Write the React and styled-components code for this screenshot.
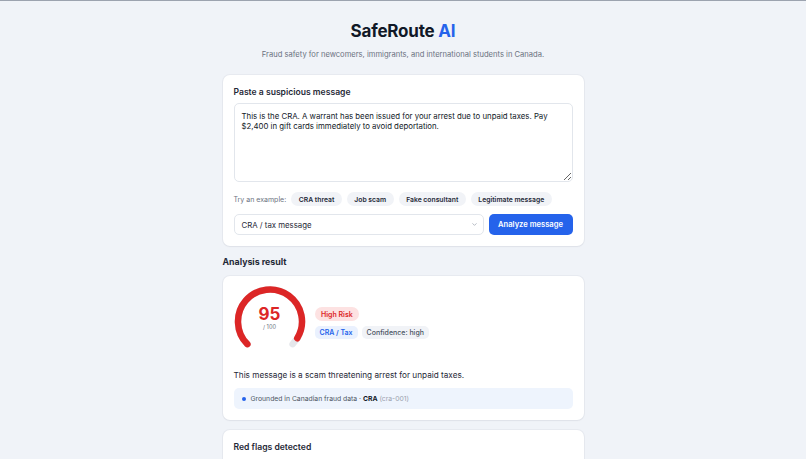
import React from "react";
import styled, { createGlobalStyle } from "styled-components";

const Global = createGlobalStyle`
  html, body { margin: 0; padding: 0; }
  body {
    background: #f0f3f8;
    font-family: Inter, "Noto Sans", "Liberation Sans", sans-serif;
    color: #111827;
    -webkit-font-smoothing: antialiased;
  }
  * { box-sizing: border-box; }
`;

const Page = styled.div`
  min-height: 459px;
  border-top: 1px solid #9ca3af;
  padding: 18px 0 20px;
`;

const Column = styled.main`
  width: 361px;
  margin: 0 auto;
  display: flex;
  flex-direction: column;
`;

const Header = styled.header`
  text-align: center;
  margin-bottom: 15px;
`;

const Title = styled.h1`
  margin: 0;
  font-size: 17px;
  line-height: 24px;
  font-weight: 700;
  letter-spacing: -0.2px;
  color: #111827;
`;

const Accent = styled.span`
  color: #2563eb;
`;

const Subtitle = styled.p`
  margin: 6px 0 0;
  font-size: 7.6px;
  line-height: 11px;
  color: #6b7280;
`;

const Card = styled.section`
  background: #fff;
  border-radius: 7px;
  box-shadow: 0 0 0 1px rgba(15, 23, 42, 0.04), 0 1px 2px rgba(15, 23, 42, 0.04);
  padding: ${(p) => p.$pad || "11px"};
  display: flex;
  flex-direction: column;
`;

const Label = styled.h2`
  margin: 0;
  font-size: 8.6px;
  line-height: 12px;
  font-weight: 600;
  color: #1f2937;
`;

const TextArea = styled.textarea`
  margin-top: 5px;
  height: 79px;
  width: 100%;
  resize: vertical;
  border: 1px solid #e2e6ec;
  border-radius: 5px;
  padding: 7px 7px;
  font-family: inherit;
  font-size: 7.8px;
  line-height: 10px;
  color: #111827;
  outline: none;
`;

const ExampleRow = styled.div`
  margin-top: 10px;
  display: flex;
  align-items: center;
  gap: 5px;
`;

const Hint = styled.span`
  font-size: 7px;
  color: #6b7280;
`;

const Chip = styled.button`
  border: none;
  background: #f1f3f7;
  border-radius: 999px;
  height: 14px;
  padding: 0 7.5px;
  font-family: inherit;
  font-size: 6.8px;
  font-weight: 600;
  color: #1f2937;
`;

const ControlRow = styled.div`
  margin-top: 8px;
  display: flex;
  gap: 5px;
`;

const Select = styled.div`
  flex: 1;
  height: 21px;
  border: 1px solid #e2e6ec;
  border-radius: 5px;
  display: flex;
  align-items: center;
  justify-content: space-between;
  padding: 0 5px 0 7px;
  font-size: 7.8px;
  color: #1f2937;
`;

const Chevron = styled.svg`
  width: 7px;
  height: 7px;
  color: #9ca3af;
`;

const PrimaryButton = styled.button`
  width: 84px;
  height: 21px;
  border: none;
  border-radius: 5px;
  background: #2563eb;
  color: #fff;
  font-family: inherit;
  font-size: 7.6px;
  font-weight: 600;
`;

const SectionTitle = styled.h2`
  margin: 10px 0 8px;
  font-size: 8.8px;
  line-height: 12px;
  font-weight: 700;
  color: #1f2937;
`;

const ScoreRow = styled.div`
  display: flex;
  align-items: center;
  gap: 9px;
`;

const Gauge = styled.div`
  display: grid;
  width: 72px;
  height: 64px;
  & > * { grid-area: 1 / 1; }
`;

const GaugeText = styled.div`
  display: flex;
  flex-direction: column;
  align-items: center;
  padding-top: 19px;
`;

const Score = styled.span`
  font-size: 17px;
  line-height: 18px;
  font-weight: 700;
  color: #dc2626;
`;

const OutOf = styled.span`
  font-size: 5.6px;
  line-height: 9px;
  color: #6b7280;
`;

const BadgeCol = styled.div`
  display: flex;
  flex-direction: column;
  align-items: flex-start;
  gap: 5px;
  margin-top: 10px;
`;

const BadgeRow = styled.div`
  display: flex;
  gap: 4px;
`;

const tones = {
  red: ["#fde2e2", "#dc2626", 600],
  blue: ["#eaf1fe", "#2563eb", 600],
  gray: ["#f1f3f7", "#4b5563", 500],
};

const Badge = styled.span`
  height: ${(p) => (p.$tone === "red" ? "14px" : "13px")};
  display: inline-flex;
  align-items: center;
  padding: 0 ${(p) => (p.$tone === "red" ? "6.5px" : "5px")};
  border-radius: ${(p) => (p.$tone === "red" ? "999px" : "5px")};
  background: ${(p) => tones[p.$tone][0]};
  color: ${(p) => tones[p.$tone][1]};
  font-weight: ${(p) => tones[p.$tone][2]};
  font-size: 7px;
`;

const Summary = styled.p`
  margin: 19px 0 0;
  font-size: 8.2px;
  line-height: 12px;
  color: #1f2937;
`;

const Grounded = styled.div`
  margin-top: 7px;
  height: 21px;
  border-radius: 5px;
  background: #eef4fd;
  display: flex;
  align-items: center;
  gap: 4px;
  padding: 0 8px;
  font-size: 6.8px;
  color: #4b5563;
`;

const Dot = styled.span`
  width: 4px;
  height: 4px;
  border-radius: 50%;
  background: #2563eb;
  margin-right: 1px;
`;

const Strong = styled.b`
  color: #111827;
  font-weight: 700;
`;

const Muted = styled.span`
  color: #9ca3af;
`;

const Stack = styled.div`
  display: flex;
  flex-direction: column;
  gap: 10px;
`;

function arcPath(cx, cy, r, a0, a1) {
  const rad = (d) => (d * Math.PI) / 180;
  const x0 = cx + r * Math.cos(rad(a0));
  const y0 = cy + r * Math.sin(rad(a0));
  const x1 = cx + r * Math.cos(rad(a1));
  const y1 = cy + r * Math.sin(rad(a1));
  const large = a1 - a0 > 180 ? 1 : 0;
  return `M ${x0} ${y0} A ${r} ${r} 0 ${large} 1 ${x1} ${y1}`;
}

function ScoreGauge({ value }) {
  const start = 135;
  const end = 135 + 270;
  const valEnd = start + (270 * value) / 100;
  return (
    <Gauge>
      <svg width="72" height="64" viewBox="0 0 72 64">
        <path d={arcPath(36, 35.5, 32, start, end)} fill="none" stroke="#e5e7eb" strokeWidth="6.5" strokeLinecap="round" />
        <path d={arcPath(36, 35.5, 32, start, valEnd)} fill="none" stroke="#dc2626" strokeWidth="6.5" strokeLinecap="round" />
      </svg>
      <GaugeText>
        <Score>{value}</Score>
        <OutOf>/ 100</OutOf>
      </GaugeText>
    </Gauge>
  );
}

export default function App() {
  return (
    <>
      <Global />
      <Page>
        <Column>
          <Header>
            <Title>
              SafeRoute <Accent>AI</Accent>
            </Title>
            <Subtitle>Fraud safety for newcomers, immigrants, and international students in Canada.</Subtitle>
          </Header>

          <Card>
            <Label>Paste a suspicious message</Label>
            <TextArea
              defaultValue="This is the CRA. A warrant has been issued for your arrest due to unpaid taxes. Pay $2,400 in gift cards immediately to avoid deportation."
            />
            <ExampleRow>
              <Hint>Try an example:</Hint>
              <Chip>CRA threat</Chip>
              <Chip>Job scam</Chip>
              <Chip>Fake consultant</Chip>
              <Chip>Legitimate message</Chip>
            </ExampleRow>
            <ControlRow>
              <Select>
                <span>CRA / tax message</span>
                <Chevron viewBox="0 0 24 24" fill="none" stroke="currentColor" strokeWidth="2.5" strokeLinecap="round" strokeLinejoin="round">
                  <path d="M6 9l6 6 6-6" />
                </Chevron>
              </Select>
              <PrimaryButton>Analyze message</PrimaryButton>
            </ControlRow>
          </Card>

          <SectionTitle>Analysis result</SectionTitle>

          <Stack>
            <Card $pad="10px 11px 11px">
              <ScoreRow>
                <ScoreGauge value={95} />
                <BadgeCol>
                  <Badge $tone="red">High Risk</Badge>
                  <BadgeRow>
                    <Badge $tone="blue">CRA / Tax</Badge>
                    <Badge $tone="gray">Confidence: high</Badge>
                  </BadgeRow>
                </BadgeCol>
              </ScoreRow>
              <Summary>This message is a scam threatening arrest for unpaid taxes.</Summary>
              <Grounded>
                <Dot />
                <span>
                  Grounded in Canadian fraud data · <Strong>CRA</Strong> <Muted>(cra-001)</Muted>
                </span>
              </Grounded>
            </Card>

            <Card $pad="11px 11px 40px">
              <Label>Red flags detected</Label>
            </Card>
          </Stack>
        </Column>
      </Page>
    </>
  );
}
